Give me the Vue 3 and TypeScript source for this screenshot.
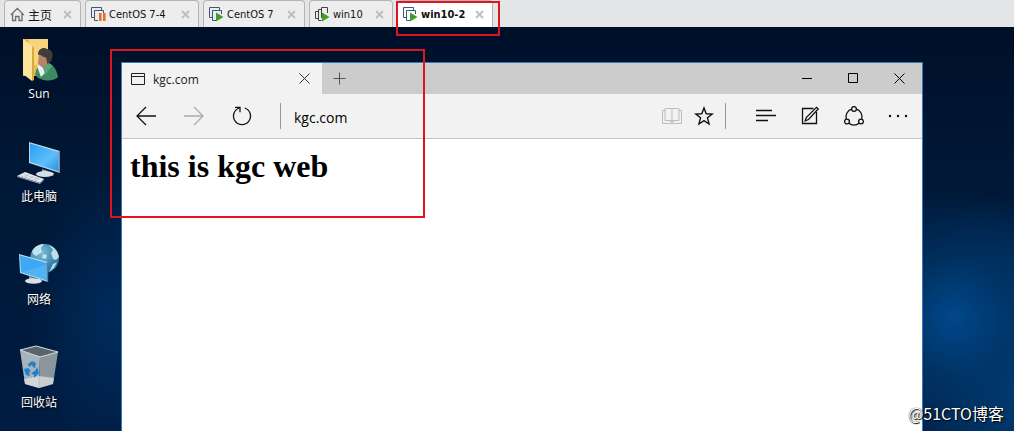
<script setup lang="ts">
import { ref } from 'vue'

type VmState = 'home' | 'paused' | 'running' | 'team'

interface VmTab {
  id: number
  label: string
  state: VmState
  width: number
}

interface Shortcut {
  id: string
  label: string
}

const tabs = ref<VmTab[]>([
  { id: 1, label: '主页', state: 'home', width: 77 },
  { id: 2, label: 'CentOS 7-4', state: 'paused', width: 114 },
  { id: 3, label: 'CentOS 7', state: 'running', width: 102 },
  { id: 4, label: 'win10', state: 'team', width: 84 },
  { id: 5, label: 'win10-2', state: 'running', width: 96 },
])
const activeTab = ref(5)
const address = ref('kgc.com')

const shortcuts: Shortcut[] = [
  { id: 'user', label: 'Sun' },
  { id: 'computer', label: '此电脑' },
  { id: 'network', label: '网络' },
  { id: 'bin', label: '回收站' },
]

function closeTab(id: number) {
  tabs.value = tabs.value.filter((t) => t.id !== id)
}
</script>

<template>
  <div class="screen">
    <nav class="vm-tabs" aria-label="虚拟机">
      <div
        v-for="tab in tabs"
        :key="tab.id"
        class="vm-tab"
        :class="{ active: tab.id === activeTab }"
        :style="{ width: tab.width + 'px' }"
      >
        <button type="button" class="vm-name" @click="activeTab = tab.id">
          <svg v-if="tab.state === 'home'" class="vm-icon" viewBox="0 0 15 15" fill="none" stroke="#6b6f74">
            <path d="M.8 8 7.3 1.4 13.8 8M2.6 6.5v7h3v-4h3.4v4h3v-7" stroke-width="1.3" />
          </svg>
          <svg v-else class="vm-icon" viewBox="0 0 15 15" fill="none">
            <template v-if="tab.state === 'team'">
              <path d="M3.500 11.500h-3v-7h3" stroke="#3d434a" />
              <path d="M6.500 13.500h-3v-11h3" stroke="#3d434a" />
              <path d="M8 10.500H6.500V.5h6V6" stroke="#3d434a" />
            </template>
            <template v-else>
              <path d="M3 10.500H.5V.5h10V3" stroke="#3c5878" />
              <path d="M7 13.500H3.500v-10h9V7" stroke="#3c5878" />
            </template>
            <path v-if="tab.state === 'paused'" d="M8 6h2.600v8H8zM12 6h2.600v8H12z" fill="#e0702f" />
            <path v-else d="M7 5.500 14.500 10 7 14.500z" fill="#3f9f26" />
          </svg>
          <span>{{ tab.label }}</span>
        </button>
        <button type="button" class="vm-close" aria-label="关闭" @click="closeTab(tab.id)">
          <svg viewBox="0 0 9 9" width="9" height="9" stroke="#bdbdbf" stroke-width="1.8">
            <path d="M1 1l7 7M8 1 1 8" />
          </svg>
        </button>
        <span v-if="tab.id === 5" class="mark mark-tab"></span>
      </div>
    </nav>

    <main class="desktop">
      <div class="shortcuts">
        <button v-for="item in shortcuts" :key="item.id" type="button" class="shortcut">
          <svg v-if="item.id === 'user'" viewBox="0 0 48 48" width="48" height="48">
            <path d="M8 3h25v37H8z" fill="#e9bd55" />
            <path d="M14 3h19v26H14z" fill="#f7d57c" />
            <path d="M8 3l9 7v35l-9-7z" fill="#ffe59a" />
            <path d="M17 10v35l2-1V12z" fill="#d6a941" />
            <path d="M20 39c1-8 5-11 10-12 6-1 11 4 13 14-4 5-17 5-23-2z" fill="#3d8b63" />
            <path d="M22 30l5-2 3 9-4 4z" fill="#e9eff0" />
            <path d="M24 18l7-3 4 6-2 8-5 3-5-4z" fill="#b98365" />
            <path d="M23 19c0-7 6-8 9-6 6 0 7 7 4 12l-3 4c-2-3 0-8-4-8-2 0-3-3-6-2z" fill="#403c3a" />
            <path d="M28 31l6-4 3 3-7 9z" fill="#5ca57d" />
          </svg>
          <svg v-else-if="item.id === 'computer'" viewBox="0 0 48 48" width="48" height="48">
            <defs>
              <linearGradient id="pc-screen" x1="0" y1="0" x2="1" y2="1">
                <stop offset="0" stop-color="#2a9df0" />
                <stop offset=".6" stop-color="#5cc0fb" />
                <stop offset="1" stop-color="#2590e4" />
              </linearGradient>
            </defs>
            <path d="M27 30l6 2v4l-6-1z" fill="#8ea5b5" />
            <ellipse cx="30" cy="35" rx="9" ry="3" fill="#d3dfe7" />
            <path d="M14 3l31 9v22L14 24z" fill="#b8d7e9" />
            <path d="M15 4.500 43.500 13v19.200L15 23z" fill="url(#pc-screen)" />
            <path d="M43.500 12l1.500.500V34l-1.500-.500z" fill="#718ca0" />
            <path d="M2 37l8-4 19 7-4 4z" fill="#e3e8ed" />
            <path d="M2 37l23 7 4-4v1l-4 4L2 38z" fill="#8c9aa6" />
            <path d="M6 37l17 5M8.500 35.500l17 5M10 38l4-4M15 40l4-3.500M20 41l4-3" stroke="#a9b5bf" stroke-width=".6" />
          </svg>
          <svg v-else-if="item.id === 'network'" viewBox="0 0 48 48" width="48" height="48">
            <defs>
              <radialGradient id="globe" cx=".4" cy=".3" r=".75">
                <stop offset="0" stop-color="#78bfd8" />
                <stop offset="1" stop-color="#1f6796" />
              </radialGradient>
            </defs>
            <circle cx="29.500" cy="16.500" r="14.500" fill="url(#globe)" />
            <path d="M17 9c3-5 7-7 12-7l-3 4 1 4-6 4-3-2zM34 3c5 2 9 6 10 12l-3 3-3-1-2-6 2-3zM38 22l4-2-3 6-5 4zM28 12l4 1-1 4-4-1z" fill="#d3ecf4" opacity=".85" />
            <path d="M14 34l5 2v3l-5-1z" fill="#8ba0af" />
            <ellipse cx="18.500" cy="39" rx="8.500" ry="2.800" fill="#d9e2e8" />
            <path d="M4 12l29 8v20L5 31z" fill="#b5d6e8" />
            <path d="M5 13.400 31.800 21v17.200L6 30z" fill="#3ba9f4" />
            <path d="M6 30 31 23v15z" fill="#5bbcf8" opacity=".6" />
            <path d="M31.800 20l1.400.400V40l-1.400-.500z" fill="#5c7d93" />
          </svg>
          <svg v-else viewBox="0 0 48 48" width="48" height="48">
            <path d="M5 5l20 7-1 31-14-4z" fill="#a9b2b9" />
            <path d="M43 7l-18 5-1 31 14-4z" fill="#8b959d" />
            <path d="M5 5l16-4 22 6-18 5z" fill="#59646c" stroke="#d8dfe4" />
            <path d="M9 34l15-3 15 2-1 6-14 4-14-4z" fill="#dde1e4" opacity=".75" />
            <path d="M24 31v12" stroke="#b9c1c7" />
            <path d="M13 19l4-3 4 2-1 5-2-1-1-2-3 2zM9 24l4-1 3 3-2 1 1 4-4-1zM22 22l2 6-5 5v-3l-3-2 4-2z" fill="#1c80d0" />
          </svg>
          <span>{{ item.label }}</span>
        </button>
      </div>

      <section class="browser">
        <header class="titlebar">
          <div class="page-tab">
            <svg viewBox="0 0 14 12" width="14" height="12" fill="none" stroke="#222">
              <path d="M.5.500h13v11H.5zM.5 3.500h13" />
            </svg>
            <span class="page-title">kgc.com</span>
            <button type="button" class="page-close" aria-label="关闭标签页">
              <svg viewBox="0 0 11 11" width="11" height="11" stroke="#333">
                <path d="M.5.500l10 10M10.500.500l-10 10" />
              </svg>
            </button>
          </div>
          <button type="button" class="new-tab" aria-label="新建标签页">
            <svg viewBox="0 0 13 13" width="13" height="13" stroke="#555"><path d="M6.500.500v12M.5 6.500h12" /></svg>
          </button>
          <div class="window-controls">
            <button type="button" aria-label="最小化">
              <svg viewBox="0 0 11 11" width="11" height="11" stroke="#000"><path d="M0 5.500h10" /></svg>
            </button>
            <button type="button" aria-label="最大化">
              <svg viewBox="0 0 11 11" width="11" height="11" stroke="#000" fill="none"><path d="M.5.500h9v9h-9z" /></svg>
            </button>
            <button type="button" aria-label="关闭">
              <svg viewBox="0 0 11 11" width="11" height="11" stroke="#000"><path d="M.5.500l10 10M10.500.500l-10 10" /></svg>
            </button>
          </div>
        </header>

        <div class="toolbar">
          <button type="button" class="nav-button" aria-label="后退">
            <svg viewBox="0 0 20 20" width="20" height="20" fill="none" stroke="#111" stroke-width="1.300">
              <path d="M20 10H1M10 1 1 10l9 9" />
            </svg>
          </button>
          <button type="button" class="nav-button" aria-label="前进" disabled>
            <svg viewBox="0 0 20 20" width="20" height="20" fill="none" stroke="#aaa" stroke-width="1.300">
              <path d="M0 10h19M10 1l9 9-9 9" />
            </svg>
          </button>
          <button type="button" class="nav-button" aria-label="刷新">
            <svg viewBox="0 0 20 20" width="20" height="20" fill="none" stroke="#111" stroke-width="1.300">
              <path d="M12.800 2A8.500 8.500 0 1 1 7.200 2M3 1.300h5v5" />
            </svg>
          </button>
          <span class="divider"></span>
          <input v-model="address" class="address" type="text" aria-label="地址" spellcheck="false" />
          <button type="button" class="small-button" aria-label="阅读视图" disabled>
            <svg viewBox="0 0 20 18" width="20" height="18" fill="none" stroke="#bdbdbd">
              <path d="M10 1.500v14M3 1.500h14v12H3zM3 3.500H.5v13h19v-13H17M7 13.500l3 2 3-2" />
            </svg>
          </button>
          <button type="button" class="small-button" aria-label="收藏">
            <svg viewBox="0 0 20 20" width="20" height="20" fill="none" stroke="#111" stroke-width="1.400">
              <path d="M10 2l2.200 5.700 6 .300-4.700 3.800 1.600 6.200L10 14.700 4.900 18l1.600-6.200L1.800 8l6-.300z" />
            </svg>
          </button>
          <span class="divider divider-right"></span>
          <button type="button" class="tool-button" aria-label="中心">
            <svg viewBox="0 0 20 20" width="20" height="20" stroke="#111" stroke-width="1.300">
              <path d="M0 4.500h16M0 9.500h20M0 14.500h12" />
            </svg>
          </button>
          <button type="button" class="tool-button" aria-label="做笔记">
            <svg viewBox="0 0 20 20" width="20" height="20" fill="none" stroke="#111" stroke-width="1.300">
              <path d="M13.500 2.500h-11v15h14V6" />
              <path d="M16.500 1.300l1.700 1.700L8.500 13.500l-3.300 1.300L6.300 11.500z" />
            </svg>
          </button>
          <button type="button" class="tool-button" aria-label="共享">
            <svg viewBox="0 0 20 20" width="20" height="20" fill="none" stroke="#111" stroke-width="1.300">
              <circle cx="10" cy="3" r="2.400" />
              <circle cx="3" cy="15.500" r="2.400" />
              <circle cx="17" cy="15.500" r="2.400" />
              <path d="M7.600 3.200A8 8 0 0 0 2.300 13M12.400 3.200A8 8 0 0 1 17.700 13M4.900 17.200a8 8 0 0 0 10.200 0" />
            </svg>
          </button>
          <button type="button" class="tool-button" aria-label="更多">
            <svg viewBox="0 0 20 20" width="20" height="20" fill="#111">
              <circle cx="2" cy="10" r="1.200" /><circle cx="10" cy="10" r="1.200" /><circle cx="18" cy="10" r="1.200" />
            </svg>
          </button>
        </div>

        <article class="page">
          <h1>this is kgc web</h1>
        </article>
        <span class="mark mark-page"></span>
      </section>

      <span class="watermark">@51CTO博客</span>
    </main>
  </div>
</template>

<style>
body {
  margin: 0;
}
</style>

<style scoped>
.screen {
  display: flex;
  flex-direction: column;
  min-height: 100vh;
  font-family: 'Open Sans', 'Noto Sans CJK SC', sans-serif;
}

button {
  display: flex;
  align-items: center;
  justify-content: center;
  margin: 0;
  padding: 0;
  border: 0;
  background: none;
  color: inherit;
  font: inherit;
}

svg {
  flex: none;
}

.vm-tabs {
  display: flex;
  align-items: flex-end;
  gap: 4px;
  height: 27px;
  padding: 0 4px;
  background: #e4e5e6;
}

.vm-tab {
  position: relative;
  box-sizing: border-box;
  display: flex;
  align-items: center;
  justify-content: space-between;
  height: 27px;
  padding: 0 8px 0 5px;
  border: 1px solid #b2b4b8;
  border-bottom: 0;
  border-radius: 4px 4px 0 0;
  background: #ededee;
  color: #111;
  font-family: 'DejaVu Sans Condensed', 'Noto Sans CJK SC', sans-serif;
  font-size: 11px;
}

.vm-tab:first-child {
  font-size: 12px;
}

.vm-tab.active {
  background: #fff;
  font-weight: bold;
}

.vm-name {
  gap: 3px;
  height: 26px;
  white-space: nowrap;
}

.vm-icon {
  width: 15px;
  height: 15px;
}

.mark {
  position: absolute;
  z-index: 2;
  box-sizing: border-box;
  border: 2px solid #e01420;
  pointer-events: none;
}

.mark-tab {
  top: 0;
  left: -2px;
  width: 104px;
  height: 35px;
}

.mark-page {
  top: -14px;
  left: -12px;
  width: 315px;
  height: 169px;
}

.desktop {
  position: relative;
  flex: 1;
  display: flex;
  padding-right: 91px;
  background:
    radial-gradient(ellipse 130px 130px at 94% 72%, #00478a, #00386cb3 45%, transparent),
    radial-gradient(ellipse 110px 200px at 100% 90%, #003a70, transparent),
    radial-gradient(ellipse 80px 150px at 11% 72%, #002b5c, transparent),
    linear-gradient(180deg, #000f28 0%, #001836 35%, #001a3c 65%, #001c42 100%);
}

.shortcuts {
  flex: 0 0 121px;
  display: flex;
  flex-direction: column;
  gap: 35px;
  padding-top: 9px;
}

.shortcut {
  flex-direction: column;
  width: 78px;
  height: 68px;
  color: #fff;
  font-size: 12px;
  line-height: 20px;
  text-shadow: 1px 1px 2px #000;
}

.browser {
  position: relative;
  flex: 1;
  min-width: 0;
  display: flex;
  flex-direction: column;
  margin-top: 35px;
  border: 1px solid #3c78b8;
  border-bottom: 0;
  background: #fff;
}

.titlebar {
  display: flex;
  height: 31px;
  background: #ccc;
}

.page-tab {
  box-sizing: border-box;
  display: flex;
  align-items: center;
  width: 200px;
  padding: 0 12px 0 9px;
  background: #f2f2f2;
}

.page-title {
  flex: 1;
  margin-left: 8px;
  padding-top: 2px;
  color: #222;
  font-size: 12px;
  line-height: 20px;
}

.new-tab {
  width: 34px;
}

.window-controls {
  display: flex;
  margin-left: auto;
}

.window-controls button {
  width: 46px;
}

.toolbar {
  display: flex;
  align-items: center;
  height: 44px;
  padding-right: 2px;
  border-bottom: 1px solid #c4c4c4;
  background: #f2f2f2;
}

.nav-button {
  width: 48px;
  height: 44px;
}

.divider {
  width: 1px;
  height: 26px;
  margin: 0 13px 0 14px;
  background: #999;
}

.divider-right {
  margin: 0 18px 0 5px;
}

.address {
  flex: 1;
  min-width: 0;
  padding: 4px 0 0;
  border: 0;
  outline: 0;
  background: none;
  color: #000;
  font: 14px/24px 'Open Sans', 'Noto Sans CJK SC', sans-serif;
}

.small-button {
  width: 32px;
  height: 44px;
}

.tool-button {
  width: 44px;
  height: 44px;
}

.page {
  padding: 8px;
}

.page h1 {
  margin: 0;
  color: #000;
  font: bold 32px/38px 'Liberation Serif', serif;
}

.watermark {
  position: absolute;
  right: 10px;
  bottom: 6px;
  z-index: 3;
  color: #fff;
  font: 16px/24px 'Noto Sans CJK SC', sans-serif;
  text-shadow: 0 0 1px #000, 1px 1px 1px #000;
}
</style>
